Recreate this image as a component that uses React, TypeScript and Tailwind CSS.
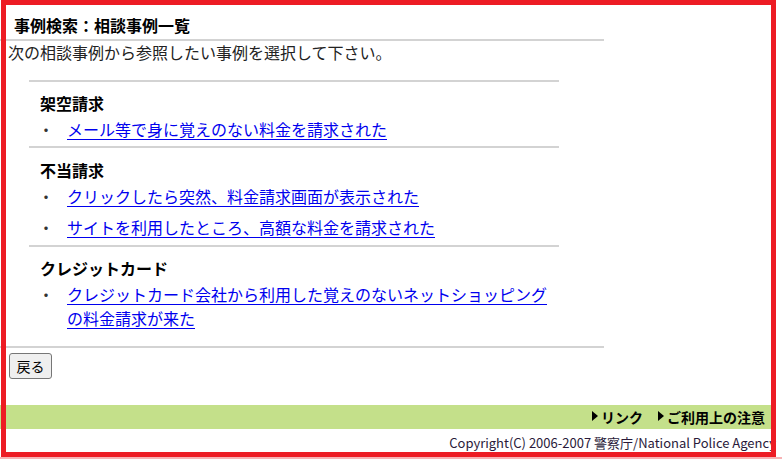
import React from "react";

const sections = [
  {
    title: "架空請求",
    links: ["メール等で身に覚えのない料金を請求された"],
  },
  {
    title: "不当請求",
    links: [
      "クリックしたら突然、料金請求画面が表示された",
      "サイトを利用したところ、高額な料金を請求された",
    ],
  },
  {
    title: "クレジットカード",
    links: [
      "クレジットカード会社から利用した覚えのないネットショッピングの料金請求が来た",
    ],
  },
];

function Triangle() {
  return (
    <svg width="6" height="10" viewBox="0 0 6 10" className="mr-[3px] mb-[2px]">
      <path d="M0 0 L6 5 L0 10 Z" fill="#000" />
    </svg>
  );
}

export default function App() {
  return (
    <div
      className="relative h-[466px] w-[782px] overflow-hidden bg-white text-black"
      style={{ fontFamily: '"Noto Sans CJK JP", "Noto Sans", sans-serif' }}
    >
      <div className="w-[776px]">
        <div className="w-[604px]">
          <h1 className="pt-[14px] pl-[14px] text-[16px] font-bold leading-[22px]">
            事例検索：相談事例一覧
          </h1>
          <div className="mt-[3px] h-[2px] bg-[#d3d3d3]" />
          <p className="pl-[8px] text-[16px] leading-[22px] text-[#222]">
            次の相談事例から参照したい事例を選択して下さい。
          </p>

          <div className="mt-[17px] ml-[29px] w-[530px]">
            {sections.map((s, i) => (
              <div
                key={s.title}
                className={`border-t-2 border-[#d3d3d3] ${
                  i === 0 ? "pt-[9px] pb-[5px]" : i === 1 ? "pt-[10px] pb-[6px]" : "pt-[9px] pb-[16px]"
                }`}
              >
                <h2 className="pl-[11px] text-[16px] font-bold leading-[24px]">{s.title}</h2>
                <ul className="mt-[2px] flex flex-col gap-[7px]">
                  {s.links.map((l) => (
                    <li key={l} className="flex text-[16px] leading-[24px]">
                      <span className="w-[38px] shrink-0 pl-[9px] text-[#333]">・</span>
                      <a href="#" className="text-[#0000ee] underline underline-offset-[3px]">
                        {l}
                      </a>
                    </li>
                  ))}
                </ul>
              </div>
            ))}
          </div>
          <div className="h-[2px] bg-[#d3d3d3]" />
        </div>

        <button className="mt-[5px] ml-[9px] h-[26px] w-[43px] rounded-[3px] border border-[#767676] bg-[#efefef] text-[14px] leading-none text-black">
          戻る
        </button>

        <div className="mt-[26px] flex h-[24px] items-center justify-end gap-[15px] bg-[#c4e08a] pr-[11px] text-[14px] font-bold">
          <a href="#" className="flex items-center text-black">
            <Triangle />
            リンク
          </a>
          <a href="#" className="flex items-center text-black">
            <Triangle />
            ご利用上の注意
          </a>
        </div>

        <p className="mt-[3px] text-right text-[13px] leading-[22px] text-[#2a1a3a]">
          Copyright(C) 2006-2007 警察庁/National Police Agency
        </p>
      </div>

      <div className="pointer-events-none absolute top-0 left-[1px] h-[457px] w-[775px] border-[5px] border-[#ed1c24]" />
      <div className="pointer-events-none absolute top-[457px] left-0 h-[2px] w-[782px] bg-[#f7b3b5]" />
    </div>
  );
}
